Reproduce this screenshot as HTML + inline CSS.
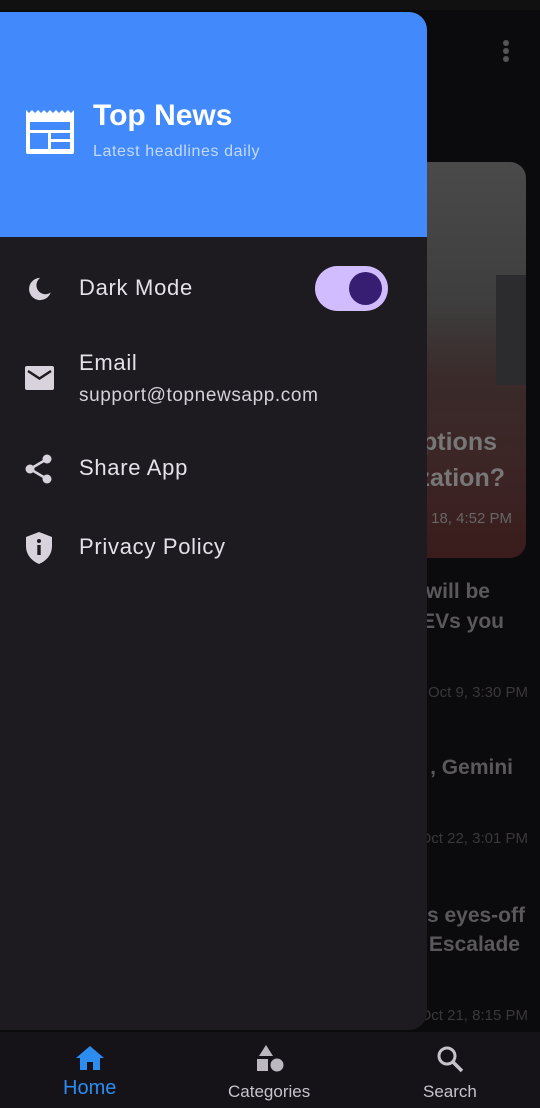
<!DOCTYPE html>
<html><head><meta charset="utf-8"><style>
*{margin:0;padding:0;box-sizing:border-box}
body{width:540px;height:1108px;background:#0b0a0c;position:relative;overflow:hidden;font-family:"Liberation Sans",sans-serif}
.abs{position:absolute}
.bgtxt{position:absolute;color:#5a585c;font-weight:bold;font-size:21px;white-space:nowrap;text-align:right}
.date{position:absolute;color:#3a383c;font-size:15px;white-space:nowrap;text-align:right}
.drawer{position:absolute;left:0;top:12px;width:427px;height:1018px;background:#1e1b20;border-radius:0 18px 18px 0;overflow:hidden}
.hdr{position:absolute;left:0;top:0;width:427px;height:225px;background:#428afc}
.item{position:absolute;left:79px;color:#e6e0e9;font-size:22px;letter-spacing:0.7px}
.ic{position:absolute;left:25px}
</style></head><body>
<div class="abs" style="left:0;top:0;width:540px;height:10px;background:#111"></div>
<div class="abs" style="left:503px;top:40px;width:6px;height:6px;border-radius:3px;background:#555"></div>
<div class="abs" style="left:503px;top:48px;width:6px;height:6px;border-radius:3px;background:#555"></div>
<div class="abs" style="left:503px;top:56px;width:6px;height:6px;border-radius:3px;background:#555"></div>
<div class="abs" style="left:400px;top:162px;width:126px;height:396px;border-radius:16px;background:linear-gradient(#4a4a4a 0,#3e3e3e 35%,#3a2a2a 55%,#3c2424 80%,#3a1c1c 100%)"></div>
<div class="abs" style="left:496px;top:275px;width:30px;height:110px;background:#2c2c2e"></div>
<div class="bgtxt" style="right:43px;top:428px;font-size:25px;color:#777">options</div>
<div class="bgtxt" style="right:35px;top:464px;font-size:25px;color:#777">ization?</div>
<div class="date" style="right:28px;top:510px;color:#666">18, 4:52 PM</div>
<div class="bgtxt" style="right:50px;top:580px">e will be</div>
<div class="bgtxt" style="right:36px;top:610px">EVs you</div>
<div class="date" style="right:12px;top:684px">Oct 9, 3:30 PM</div>
<div class="bgtxt" style="right:27px;top:756px">, Gemini</div>
<div class="date" style="right:12px;top:830px">Oct 22, 3:01 PM</div>
<div class="bgtxt" style="right:15px;top:904px">s eyes-off</div>
<div class="bgtxt" style="right:20px;top:933px">Escalade</div>
<div class="date" style="right:12px;top:1007px">Oct 21, 8:15 PM</div>

<div class="drawer">
 <div class="hdr">
  <svg class="abs" style="left:26px;top:96px" width="48" height="46" viewBox="0 0 48 46">
   <path d="M0 2 l3 3 l3-3 l3 3 l3-3 l3 3 l3-3 l3 3 l3-3 l3 3 l3-3 l3 3 l3-3 l3 3 l3-3 l3 3 l3-3 V44 a2 2 0 0 1-2 2 H2 a2 2 0 0 1-2-2Z" fill="#fff"/>
   <rect x="4" y="14" width="40" height="8" fill="#428afc"/>
   <rect x="4" y="25" width="18" height="16" fill="#428afc"/>
   <rect x="25" y="25" width="19" height="6" fill="#428afc"/>
   <rect x="25" y="34" width="19" height="7" fill="#428afc"/>
  </svg>
  <div class="abs" style="left:93px;top:87px;color:#fff;font-size:30px;font-weight:bold">Top News</div>
  <div class="abs" style="left:93px;top:131px;color:#c4d9fb;font-size:16px;letter-spacing:0.6px">Latest headlines daily</div>
 </div>
 <svg class="ic" style="top:263px" width="28" height="28" viewBox="0 0 24 24"><path d="M13 2.5a9.5 9.5 0 1 0 9 12.5 7.5 7.5 0 0 1-9-12.5z" fill="#d8d2dc"/></svg>
 <div class="item" style="top:263px">Dark Mode</div>
 <div class="abs" style="left:315px;top:254px;width:73px;height:45px;border-radius:23px;background:#d0bcff"></div>
 <div class="abs" style="left:349px;top:260px;width:33px;height:33px;border-radius:17px;background:#381e72"></div>
 <svg class="ic" style="top:354px" width="29" height="26" viewBox="0 0 29 26"><rect x="0" y="0" width="29" height="24" rx="2" fill="#d8d2dc"/><path d="M3 5 L14.5 12.5 L26 5" stroke="#1e1b20" stroke-width="2.5" fill="none"/></svg>
 <div class="item" style="top:338px">Email</div>
 <div class="item" style="top:373px;font-size:19px;color:#d6d0da;letter-spacing:0.6px">support@topnewsapp.com</div>
 <svg class="ic" style="top:442px" width="28" height="30" viewBox="0 0 28 30"><circle cx="22" cy="5" r="4.5" fill="#d8d2dc"/><circle cx="5" cy="15" r="4.5" fill="#d8d2dc"/><circle cx="22" cy="25" r="4.5" fill="#d8d2dc"/><path d="M22 5 L5 15 L22 25" stroke="#d8d2dc" stroke-width="2.5" fill="none"/></svg>
 <div class="item" style="top:443px">Share App</div>
 <svg class="ic" style="top:519px" width="28" height="34" viewBox="0 0 28 34"><path d="M14 1 L27 6 V15 C27 24 21 30 14 33 C7 30 1 24 1 15 V6Z" fill="#d8d2dc"/><rect x="12.3" y="14" width="3.4" height="10" fill="#1e1b20"/><circle cx="14" cy="10" r="2" fill="#1e1b20"/></svg>
 <div class="item" style="top:522px">Privacy Policy</div>
</div>

<div class="abs" style="left:0;top:1032px;width:540px;height:76px;background:#151318"></div>
<svg class="abs" style="left:75px;top:1045px" width="30" height="26" viewBox="0 0 30 26"><path d="M15 1 L29 13 H25 V25 H18 V17 H12 V25 H5 V13 H1Z" fill="#2d8cf0"/></svg>
<div class="abs" style="left:63px;top:1077px;color:#2d8cf0;font-size:20px">Home</div>
<svg class="abs" style="left:256px;top:1044px" width="30" height="30" viewBox="0 0 30 30"><path d="M10 1 L17 12 H3Z" fill="#bdb8c0"/><rect x="1" y="15" width="11" height="12" fill="#bdb8c0"/><circle cx="21" cy="21" r="6.5" fill="#bdb8c0"/></svg>
<div class="abs" style="left:228px;top:1082px;color:#c8c2cc;font-size:17px">Categories</div>
<svg class="abs" style="left:436px;top:1045px" width="28" height="28" viewBox="0 0 28 28"><circle cx="11" cy="11" r="8" stroke="#c8c2cc" stroke-width="3" fill="none"/><path d="M17 17 L26 26" stroke="#c8c2cc" stroke-width="3.5"/></svg>
<div class="abs" style="left:423px;top:1082px;color:#c8c2cc;font-size:17px">Search</div>
</body></html>
